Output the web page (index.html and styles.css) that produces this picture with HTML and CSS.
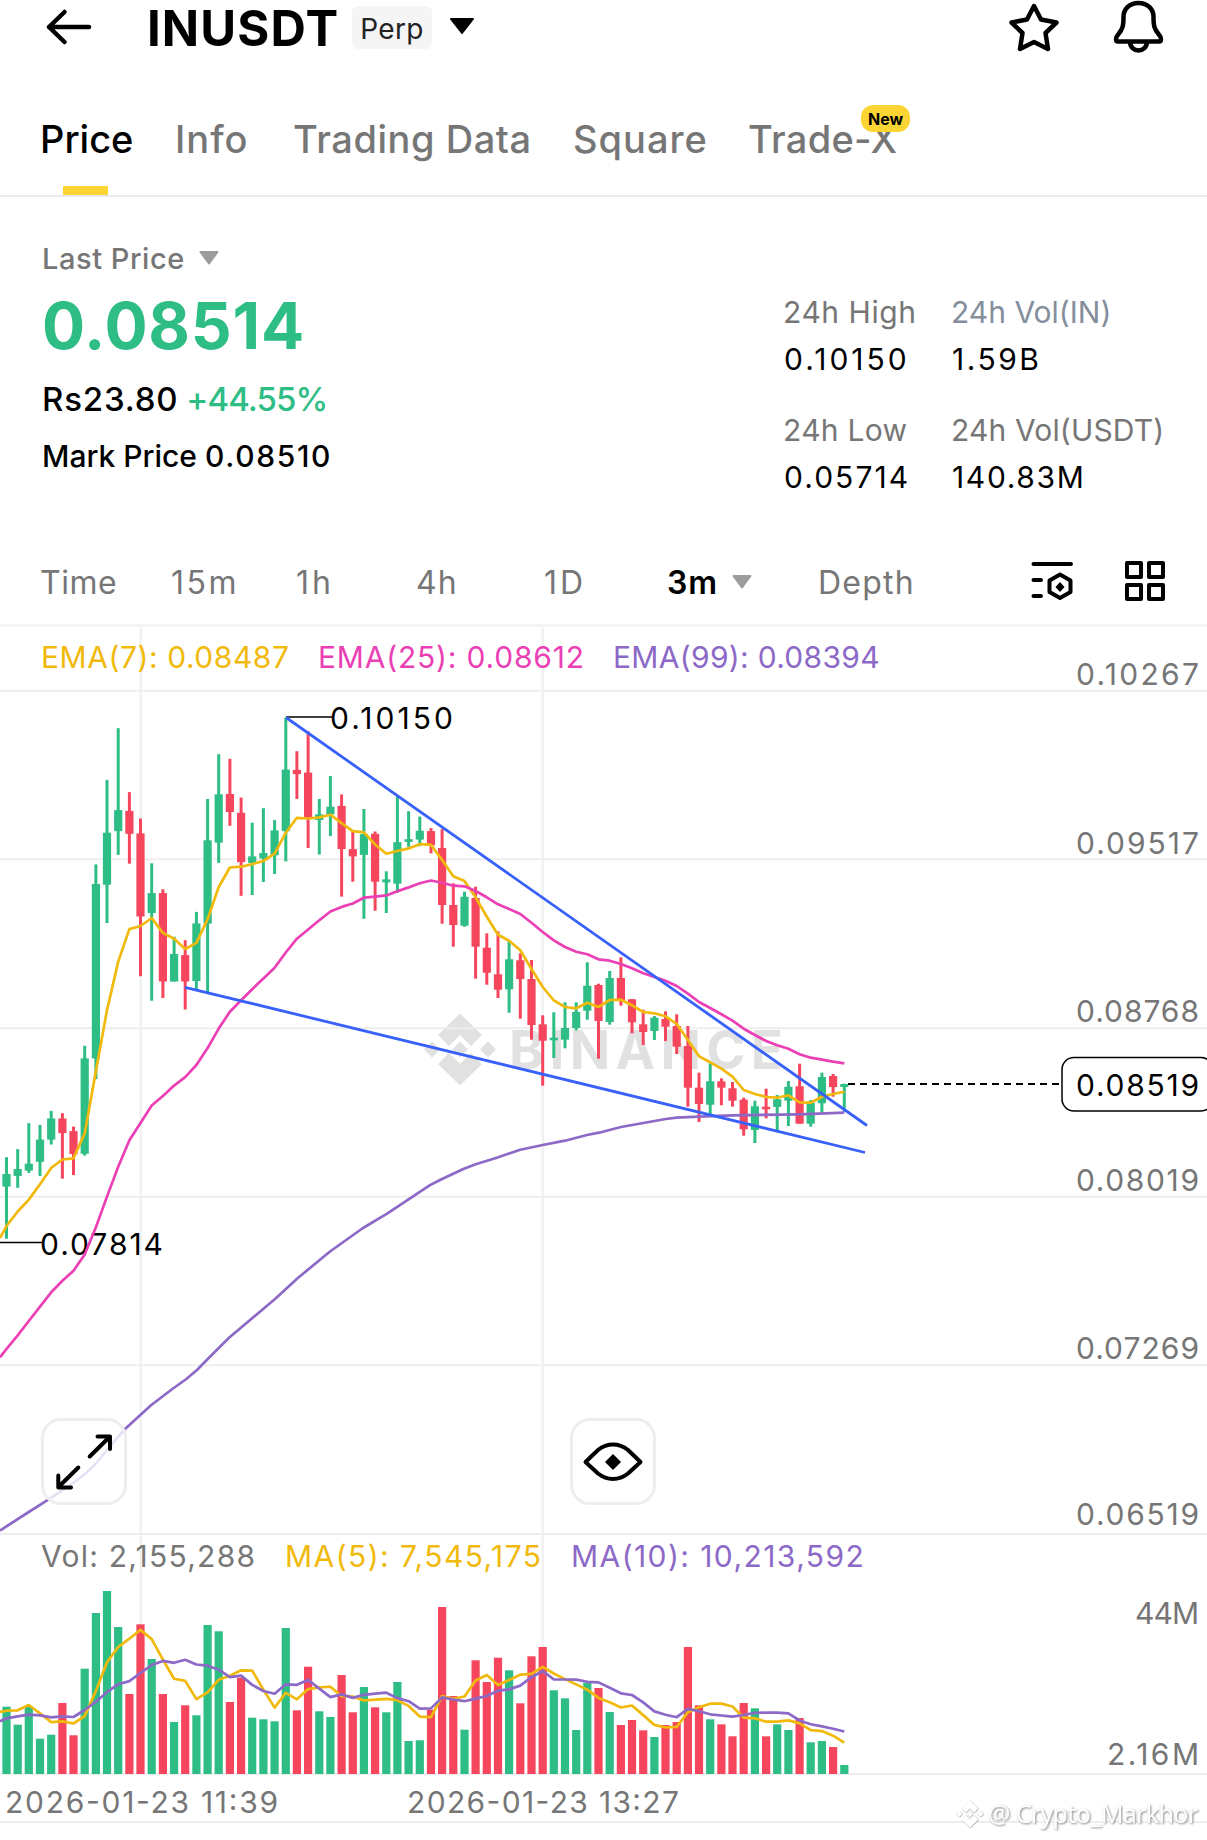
FILE: index.html
```html
<!DOCTYPE html>
<html lang="en">
<head>
<meta charset="utf-8">
<title>INUSDT Perp</title>
<link rel="stylesheet" href="styles.css">
</head>
<body>
<div class="screen">
  <header class="topbar">
    <svg class="back" width="50" height="40" viewBox="44 7 50 40"><path d="M89 27H49M64.500 12L49 27L64.500 42"/></svg>
    <h1 class="pair">INUSDT</h1>
    <span class="perp">Perp</span>
    <svg class="caret-lg" width="26" height="17" viewBox="0 0 26 17"><path d="M2 1H24L13 15Z"/></svg>
    <svg class="star" width="54" height="52" viewBox="1007 1 54 52"><path d="M1034 6L1041 19.500L1056.500 22.500L1045.500 33L1048 49L1034 42L1020 49L1022.500 33L1011.500 22.500L1027 19.500Z"/></svg>
    <svg class="bell" width="52" height="54" viewBox="1112 0 52 54"><path d="M1138.500 3C1129 3 1123.500 9.500 1123.500 17C1123.500 26 1122.500 29.500 1118.500 34C1115 38 1115.500 41.500 1118 41.500H1159C1161.500 41.500 1162 38 1158.500 34C1154.500 29.500 1153.500 26 1153.500 17C1153.500 9.500 1148 3 1138.500 3ZM1130 42C1130 47 1134 50.500 1138.500 50.500S1147 47 1147 42"/></svg>
  </header>
  <nav class="tabs">
    <span class="tab active">Price</span>
    <span class="tab ls-10">Info</span>
    <span class="tab ls-5">Trading Data</span>
    <span class="tab ls-10">Square</span>
    <span class="tab ls-3">Trade-X<b class="badge">New</b></span>
  </nav>
  <section class="stats">
    <div class="quote">
      <div class="last"><span class="ls-5">Last Price</span><svg width="20" height="14" viewBox="0 0 20 14"><path d="M1.500 1H18.500L10 12.500Z"/></svg></div>
      <div class="price">0.08514</div>
      <div class="fiat"><span class="ls-8">Rs23.80</span><span class="up">+44.55%</span></div>
      <div class="mark"><span>Mark Price</span><span class="ls-16">0.08510</span></div>
    </div>
    <div class="day">
      <div class="cell"><span class="k ls-5">24h High</span><span class="v ls-28">0.10150</span></div>
      <div class="cell"><span class="k slate">24h Vol(IN)</span><span class="v ls-24">1.59B</span></div>
      <div class="cell"><span class="k ls-3">24h Low</span><span class="v ls-20">0.05714</span></div>
      <div class="cell"><span class="k ls-1">24h Vol(USDT)</span><span class="v ls-16">140.83M</span></div>
    </div>
  </section>
  <nav class="intervals">
    <span class="ls-5">Time</span><span class="ls-24">15m</span><span class="ls-28">1h</span><span class="ls-10">4h</span><span class="ls-28">1D</span>
    <span class="on"><b class="ls-10">3m</b><svg width="20" height="14" viewBox="0 0 20 14"><path d="M1.500 1H18.500L10 12.500Z"/></svg></span>
    <span class="ls-12">Depth</span>
    <svg class="tool" width="46" height="46" viewBox="1029 558 46 46"><path d="M1033.500 564H1071M1033.500 580H1041M1033.500 596H1041M1060 574.500L1070.500 580.500V592L1060 598L1049.500 592V580.500Z"/><path class="solid" d="M1060 582L1064.500 587L1060 592L1055.500 587Z"/></svg>
    <svg class="tool" width="44" height="44" viewBox="1123 558 44 44"><path d="M1127 562H1141V576H1127ZM1149 562H1163V576H1149ZM1127 584H1141V598H1127ZM1149 584H1163V598H1149Z"/></svg>
  </nav>
  <main class="chart">
    <svg id="plot" class="plot" width="1207" height="1213" viewBox="0 627 1207 1213"></svg>
    <div class="legend"><span class="c-yellow ls-5">EMA(7): 0.08487</span><span class="c-pink ls-8">EMA(25): 0.08612</span><span class="c-purple ls-3">EMA(99): 0.08394</span></div>
    <div class="buttons">
      <button class="fab" aria-label="Expand"><svg width="60" height="60" viewBox="54 1432 60 60"><path d="M89.700 1456.500L109.500 1437M97.500 1436.500H110V1449M78.300 1467.500L58.500 1487M58.300 1475.500V1487.500H71"/></svg></button>
      <button class="fab" aria-label="Show"><svg width="64" height="60" viewBox="581 1432 64 60"><path d="M585.500 1462L598 1450Q605 1444.500 613 1444.500T628 1450L640.500 1462L628 1473.500Q621 1479 613 1479T598 1473.500Z"/><path class="solid" d="M613 1454L621 1462L613 1470L605 1462Z"/></svg></button>
    </div>
    <div class="legend vol"><span class="c-grey ls-12">Vol: 2,155,288</span><span class="c-yellow ls-14">MA(5): 7,545,175</span><span class="c-purple ls-14">MA(10): 10,213,592</span></div>
  </main>
</div>
<script src="script.js"></script>
</body>
</html>
```
FILE: styles.css
```css
* { box-sizing: border-box; }
body { margin: 0; background: #fff; color: #000; font-family: Inter, "Liberation Sans", sans-serif; }
.screen { width: 1207px; height: 1840px; overflow: hidden; display: flex; flex-direction: column; }
svg { display: block; flex: none; }
span, b, h1, div { white-space: nowrap; }

/* Tracking steps, in tenths of a pixel */
.ls-1 { letter-spacing: .15px; }
.ls-3 { letter-spacing: .3px; }
.ls-5 { letter-spacing: .55px; }
.ls-8 { letter-spacing: .8px; }
.ls-10 { letter-spacing: 1px; }
.ls-12 { letter-spacing: 1.250px; }
.ls-14 { letter-spacing: 1.420px; }
.ls-16 { letter-spacing: 1.650px; }
.ls-20 { letter-spacing: 2.050px; }
.ls-24 { letter-spacing: 2.500px; }
.ls-28 { letter-spacing: 3px; }

.topbar { height: 60px; display: flex; align-items: flex-start; padding-left: 44px; }
.topbar svg path { fill: none; stroke: #000; stroke-width: 4.500px; stroke-linecap: round; stroke-linejoin: round; }
.back { margin-top: 7px; }
.pair { flex: none; margin: 0 0 0 53px; width: 205px; font-size: 49px; line-height: 57px; font-weight: 700; letter-spacing: 1.100px; }
.perp { flex: none; margin-top: 6px; width: 80px; height: 43px; border-radius: 6px; background: #f5f5f5; color: #222; font-size: 28px; line-height: 46px; text-align: center; letter-spacing: .3px; }
.caret-lg { margin: 18px 0 0 17px; }
.topbar .caret-lg path { fill: #000; stroke-width: 2px; }
.star { margin: 1px 0 0 532px; }
.bell { margin-left: 51px; }

.tabs { height: 137px; padding: 52px 0 0 40px; display: grid; grid-template-columns: 135px 118px 280px 175px auto; border-bottom: 2px solid #eaeaea; font-size: 38px; line-height: 54px; font-weight: 500; color: #767676; }
.tab { position: relative; }
.active { color: #000; }
.active::after { content: ""; position: absolute; left: 23px; top: 74px; width: 45px; height: 9px; background: #fcd535; }
.badge { position: absolute; left: 113px; top: -7px; width: 49px; height: 27px; border-radius: 12px; background: #fcd535; color: #000; font-size: 16px; line-height: 28px; font-weight: 700; letter-spacing: 0; text-align: center; }

.stats { height: 343px; display: flex; padding-left: 41px; }
.quote { width: 742px; padding: 43px 0 0 1px; }
.last { display: flex; gap: 14px; align-items: center; height: 36px; font-size: 29px; font-weight: 500; color: #767676; }
svg path { stroke-linejoin: round; }
.last path, .on path { fill: #9c9c9c; stroke: #9c9c9c; stroke-width: 2px; }
.price { margin-top: 12px; height: 76px; line-height: 76px; font-size: 64px; font-weight: 700; letter-spacing: .8px; color: #2ebd85; }
.fiat { display: flex; gap: 8px; margin-top: 13px; line-height: 44px; font-size: 33px; font-weight: 500; }
.up { color: #2ebd85; letter-spacing: -.900px; }
.mark { display: flex; gap: 8px; margin-top: 15px; line-height: 40px; font-size: 30px; font-weight: 500; }
.day { padding-top: 95px; display: grid; grid-template-columns: 168px 230px; grid-auto-rows: 118px; font-size: 30px; line-height: 40px; }
.cell { display: flex; flex-direction: column; gap: 7px; }
.k { color: #767676; }
.slate { color: #848e9c; }
.cell .v { padding-left: 1px; }

.intervals { height: 87px; padding-left: 40px; display: grid; grid-template-columns: 131px 125px 120px 128px 123px 151px 211px 94px auto; align-items: center; border-bottom: 3px solid #f4f4f4; font-size: 32px; color: #767676; }
.on { display: flex; align-items: center; gap: 14px; }
.on b { color: #000; font-weight: 600; }
.tool { position: relative; top: -1px; }
.tool path { fill: none; stroke: #000; stroke-width: 4px; stroke-linecap: round; }
.tool .solid, .fab .solid { fill: #000; stroke: none; }

.chart { position: relative; flex: 1; }
.plot { position: absolute; left: 0; top: 0; z-index: -1; }
.legend { height: 60px; padding-left: 41px; display: grid; grid-template-columns: 277px 295px auto; align-items: center; font-size: 30px; }
.vol { grid-template-columns: 244px 286px auto; }
.c-yellow { color: #f0b90b; }
.c-pink { color: #eb40b5; }
.c-purple { color: #8c69c7; }
.c-grey { color: #767676; }
.buttons { display: flex; gap: 443px; padding: 731px 0 0 41px; height: 839px; }
.fab { width: 86px; height: 87px; padding: 0; display: grid; place-items: center; border: 3px solid #eee; border-radius: 20px; background: rgba(255, 255, 255, .8); }
.fab path { fill: none; stroke: #000; stroke-width: 4px; stroke-linecap: round; }

.grid { stroke: #eee; stroke-width: 2px; }
.g { fill: #2ebd85; }
.r { fill: #f6465d; }
.line { fill: none; stroke-width: 2.700px; stroke-linejoin: round; }
.l-yellow { stroke: #f0b90b; }
.l-pink { stroke: #eb40b5; }
.l-purple { stroke: #8c69c7; }
.trend { stroke: #3861fb; stroke-width: 2.800px; }
.axis { fill: #767676; font-size: 30px; }
.dark { fill: #000; font-size: 30px; }
.lead { stroke: #000; stroke-width: 1.500px; }
.dash { stroke: #000; stroke-width: 1.800px; stroke-dasharray: 7 5; }
.tag { fill: #fff; stroke: #000; stroke-width: 1.500px; }
.mark-logo { fill: #e1e1e1; }
.mark-name { fill: #e1e1e1; font-size: 53px; font-weight: 700; }
.credit { fill: #fff; font-family: "Noto Sans", sans-serif; font-size: 25px; filter: drop-shadow(1px 1px 1px #888); }
```
FILE: script.js
```js
// Candles: direction, high, body top, body bottom, low (plot coordinates), volume bar height.
const candles = `
G 1157.2 1174 1186.6 1238.7 202|G 1149.1 1169 1175.9 1187.8 148|G 1123.1 1163.7 1170.6 1172.9 204|G 1125 1139.6 1161.8 1175.9 106
G 1110.9 1118.5 1139.6 1144.5 118|R 1113.2 1118.5 1133.1 1178.6 213|R 1126.6 1131.1 1154.1 1175.1 116|G 1045.8 1058.4 1153.7 1155.6 316
G 864.4 884 1058.4 1079.1 483|G 779.9 832.7 884.7 923 549|G 728.2 810.1 831.1 854.9 441|R 792.1 810.9 833.8 863.7 240
R 818.5 833.4 916.5 976.2 449|G 863.3 893.1 913 1000.7 345|R 889.3 893.1 981.5 998 240|G 936.8 954 981.5 981.5 156
R 940.2 955.1 981.5 1009.5 206|G 911.9 923.4 981.1 989.2 176|G 799 840.3 923.7 993.8 447|G 754.2 794.4 842.6 862.9 428
R 758.8 794 812 825.8 216|R 797.5 812.8 862.1 895.8 289|G 822.7 856.4 862.9 895 169|G 808.2 853 858.3 882 164
G 820.1 830.4 855.3 874 158|G 717.5 769.5 831.1 861.4 438|R 751.2 769.9 774.1 799 191|R 731.3 772.6 817.8 848 322
G 799 814.3 820 854.5 188|G 776 806.7 814.3 836.1 171|R 794.4 805.9 849.1 896.6 297|R 830 849.1 856.4 881.7 185
G 809 834.2 854.9 918.8 261|R 831.5 833.8 881.7 910.7 200|G 871.3 879.4 882.4 913 185|G 796.7 842.2 883.6 892.8 276
G 811.2 839.2 841.9 846.8 99|G 816.6 830.8 839.6 846.1 101|R 828.1 831.1 845.3 853.3 193|R 829.2 848 905 923.7 501
R 883.3 905 925 946.7 234|G 891.7 896.7 925.7 926.7 133|R 886.7 898 946.7 978.7 341|R 933.3 947.7 972.7 984.7 276
R 931.3 974.3 989.7 998 349|G 941.7 959.3 989.3 1012.7 311|R 953.3 960.3 979 1018.7 212|R 960 979 1025 1039.7 353
R 1015.3 1024.3 1040.7 1085.7 381|G 1012.3 1037.7 1040.3 1058 251|G 1002.3 1028 1039.7 1048.3 227|G 1002.3 1012 1028 1030.3 132
G 962.3 985.7 1010.7 1019.7 274|R 983.7 985 1021 1058.7 258|G 971 978 1022 1024.7 186|R 957.3 978 1000 1005.7 147
R 999 999.3 1022.3 1033.3 162|R 1009.7 1024.3 1032 1045 131|G 1016 1017.7 1031 1040 111|R 1011.3 1019 1026.7 1041 147
R 1014.3 1026 1046.7 1054 156|R 1026 1046 1087.7 1106.7 381|R 1072.7 1087.7 1104 1122 206|G 1063.3 1081.3 1104.7 1115.7 164
R 1078.3 1081.3 1087.7 1105.3 149|R 1082 1088.3 1100.7 1106.7 113|R 1097.7 1099.7 1129.3 1135.7 213|G 1100.7 1106.3 1130 1143 197
R 1088.7 1106.7 1109.3 1118.3 113|G 1095 1099.3 1107 1131.3 149|G 1081 1086.7 1100.7 1126 132|R 1063.7 1086.3 1123.7 1123.7 168
G 1100 1103 1123.7 1126.7 95|G 1072.7 1077 1103.3 1112.7 99|R 1074 1076 1087 1096.7 81|G 1083.7 1084 1087 1111.7 27
`.trim().split(/[|\n]/).map(s => { const [d, ...n] = s.split(' '); return [d.toLowerCase(), ...n.map(Number)]; });

const ema7 = [1226,1211.5,1199.6,1184.3,1167.9,1159.5,1158.3,1133.4,1071.1,1010.2,961.6,929.1,926,918,932.9,938.7,949,942.9,919.2,887,867.5,866.7,864.1,861,853.7,832.7,817.8,818.5,817.4,814.7,823.1,831.1,832.3,844.5,853.7,851,848.4,844.2,844.9,860,876.3,881,897.3,916.7,934.7,940.7,950.3,969,987,1000.3,1007,1008.3,1002.7,1007,1000,999.7,1005.3,1012,1013.3,1016.3,1024,1040,1056.3,1062.3,1068.7,1076.7,1090,1094,1097,1097.7,1095.3,1102.3,1102.7,1096.7,1094,1091.7];
const ema25 = [1349,1335.3,1321,1306.7,1292.3,1280.7,1270.7,1254.4,1227.2,1196.6,1166.7,1140.3,1123.1,1105.5,1095.9,1085.6,1077.2,1065,1048.1,1028.6,1011.8,1000.3,989.2,978.5,967.8,952.5,938.7,929.5,920.3,911.5,906.9,903.5,897.7,896.6,895.4,891.2,887.4,883.2,880.5,882.7,885.7,886.3,891,897.3,904.3,909,914,922.7,932,940.3,947,951.7,954.3,959.3,960.7,964,968.3,973.3,977,980.7,986,993.7,1002,1008,1014.3,1020.7,1028.7,1035,1041,1045.3,1048.7,1054.3,1057.7,1059.7,1061.7,1063.3];
const ema99 = '0,1530.5 28,1512.5 46.7,1500.7 72,1484 85,1474 96,1463.5 107,1450 125,1429 151,1405.3 173,1388.5 185.700,1379.5 197,1370 208,1358.700 229,1337.700 275,1299 297,1278.700 330,1251.500 363,1228 386.700,1213.800 430,1185.100 440,1180 463.300,1169 475.700,1164.300 496.700,1157.700 520.300,1149.700 542.700,1145 565,1140.700 587,1135 599,1132.700 621,1127 643.300,1123 665.700,1119 676.700,1117.700 699,1116.700 732.700,1115.300 799.700,1114.300 844.300,1112.700';

const X0 = 6.5, STEP = 11.17, BASE = 1774;
const x = i => +(X0 + i * STEP).toFixed(1);
const out = [];
const line = (x1, y1, x2, y2, c) => out.push(`<line x1="${x1}" y1="${y1}" x2="${x2}" y2="${y2}" class="${c}"/>`);
const rect = (l, t, w, h, c) => out.push(`<rect x="${l.toFixed(1)}" y="${t.toFixed(1)}" width="${w}" height="${h.toFixed(1)}" class="${c}"/>`);
const text = (l, b, len, c, s) => out.push(`<text x="${l}" y="${b}" textLength="${len}" class="${c}">${s}</text>`);
const poly = (pts, c) => out.push(`<polyline points="${pts}" class="line ${c}"/>`);
const series = (first, ys) => `0,${first} ` + ys.map((y, i) => `${x(i)},${y}`).join(' ');
const logo = (cx, cy, k, c) => out.push(`<path class="${c}" transform="translate(${cx} ${cy}) scale(${k})" d="M0-36L22-14.500L11-3.500L0-14.500L-11-3.500L-22-14.500ZM0 36L22 14.500L11 3.500L0 14.500L-11 3.500L-22 14.500ZM0-8L8 0L0 8L-8 0ZM-36 0L-28-8L-20 0L-28 8ZM36 0L28-8L20 0L28 8Z"/>`);

logo(460, 1049.5, 1, 'mark-logo');
text(509, 1069, 274, 'mark-name', 'BINANCE');
[690.7, 859.2, 1028.2, 1196.7, 1365.3, 1534, 1774, 1822].forEach(y => line(0, y, 1207, y, 'grid'));
[140.7, 542.7].forEach(v => line(v, 628, v, BASE, 'grid'));

candles.forEach(([d, hi, top, bot, lo, vol], i) => {
  rect(x(i) - 1.5, hi, 3, lo - hi, d);
  rect(x(i) - 4.1, top, 8.2, Math.max(bot - top, 2.4), d);
  rect(x(i) - 4.1, BASE - vol / 3, 8.2, vol / 3, d);
});

// Volume averages; the head of each series depends on bars left of the plot.
const average = (n, head) => candles.map((_, i) => {
  const h = i < head.length ? head[i] : candles.slice(i - n + 1, i + 1).reduce((s, c) => s + c[5], 0) / n;
  return +(BASE - h / 3).toFixed(1);
});
poly(series(BASE - 62, average(5, [190, 191, 207, 182])), 'l-yellow');
poly(series(BASE - 52.7, average(10, [167, 173, 178, 176, 170, 173, 171, 192, 217])), 'l-purple');

line(286, 717, 332, 717, 'lead');
line(0, 1242.5, 42, 1242.5, 'lead');
text(330, 728.5, 123, 'dark', '0.10150');
text(40, 1254.5, 123, 'dark', '0.07814');
poly(series(1238, ema7), 'l-yellow');
poly(series(1357.3, ema25), 'l-pink');
poly(ema99, 'l-purple');
line(286, 717.5, 867, 1125.5, 'trend');
line(185, 987.3, 865, 1152.5, 'trend');

line(848, 1084, 1060, 1084, 'dash');
out.push('<rect x="1062" y="1057.500" width="151" height="53.500" rx="12" class="tag"/>');
text(1076, 1096, 123, 'dark', '0.08519');
[[685, '0.10267'], [853.5, '0.09517'], [1022, '0.08768'], [1191, '0.08019'], [1359, '0.07269'], [1525, '0.06519']]
  .forEach(([y, s]) => text(1076, y, 123, 'axis', s));
text(1135, 1624, 64, 'axis', '44M');
text(1107, 1765, 92, 'axis', '2.16M');
text(5, 1813, 273, 'axis', '2026-01-23 11:39');
text(407, 1813, 272, 'axis', '2026-01-23 13:27');
logo(970, 1814, 0.38, 'credit');
text(988, 1823, 210, 'credit', '@ Crypto_Markhor');
document.getElementById('plot').innerHTML = out.join('');
```
